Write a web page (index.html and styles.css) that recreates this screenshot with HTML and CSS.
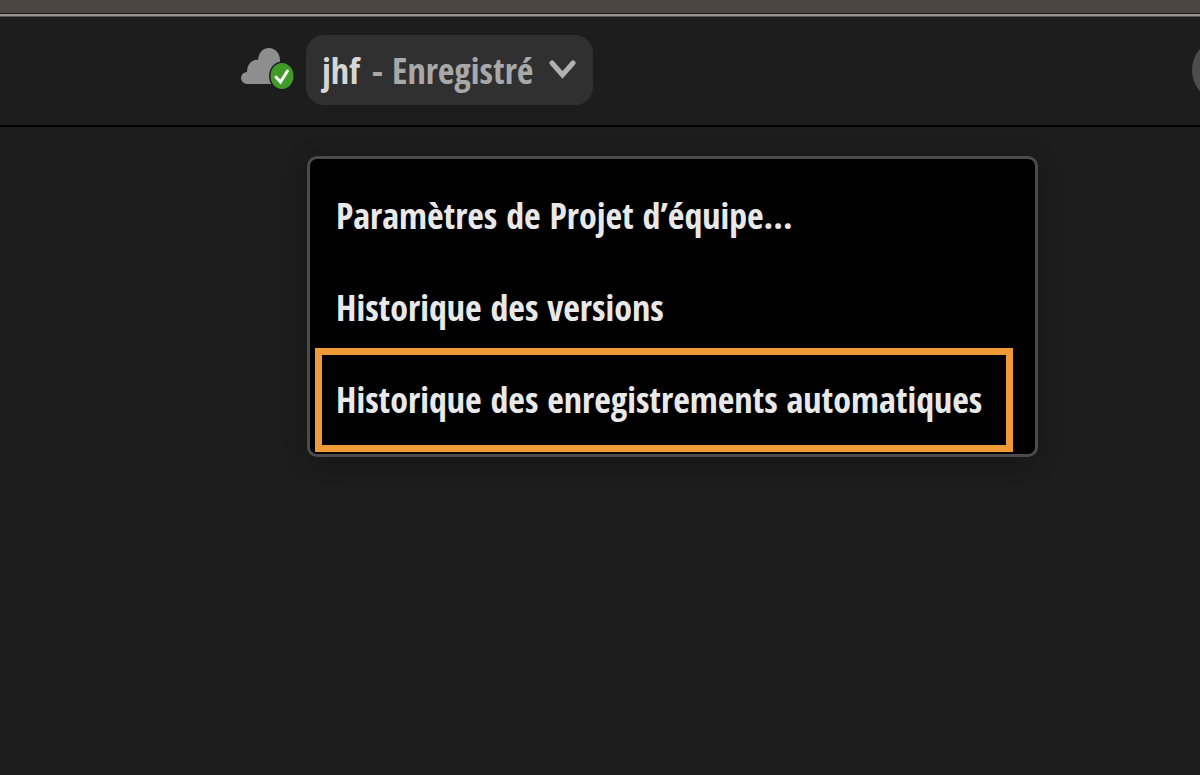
FILE: index.html
```html
<!DOCTYPE html>
<html lang="fr">
<head>
    <meta charset="UTF-8">
    <meta name="viewport" content="width=device-width, initial-scale=1.0">
    <title>Projet d’équipe</title>
    <link rel="stylesheet" href="styles.css">
</head>
<body>
    <div class="window-edge"></div>
    <header class="header">
        <svg class="cloud-icon" viewBox="0 0 54 44" aria-hidden="true">
            <path fill="#8e8e8e" d="M7 36a6 6 0 0 1 0-12C7 16 12 11 18 12 19 4 23 0 29 0s11 5 11 12v24z"/>
            <ellipse cx="42" cy="28" rx="13" ry="14.500" fill="#1d1d1d"/>
            <ellipse cx="42" cy="28" rx="11.500" ry="13" fill="#3f9a27"/>
            <path d="M36 29l4.500 5 7-11" fill="none" stroke="#fff" stroke-width="3" stroke-linecap="round"/>
        </svg>
        <button class="project-btn" id="projectBtn" aria-haspopup="true" aria-controls="projectMenu">
            <span class="project-name">jhf</span>
            <span class="project-status">- Enregistré</span>
            <svg class="chevron" viewBox="0 0 28 22" aria-hidden="true">
                <path d="M3 4l10.500 12L24 4" fill="none" stroke="#b0b0b0" stroke-width="5" stroke-linecap="round"/>
            </svg>
        </button>
        <button class="account-btn" aria-label="Compte"></button>
    </header>
    <main class="content">
        <div class="menu" id="projectMenu" role="menu" aria-labelledby="projectBtn">
            <button class="menu-item" role="menuitem">Paramètres de Projet d’équipe…</button>
            <button class="menu-item" role="menuitem">Historique des versions</button>
            <button class="menu-item selected" role="menuitem">Historique des enregistrements automatiques</button>
        </div>
    </main>
</body>
</html>
```
FILE: styles.css
```css
* {
    box-sizing: border-box;
}
body {
    min-height: 100vh;
    margin: 0;
    font-family: "Open Sans Condensed", "Roboto Condensed", "Open Sans", sans-serif;
    font-size: 36px;
    background: #1d1d1d;
    color: #e8e8e8;
    display: flex;
    flex-direction: column;
    overflow-x: hidden;
}
button {
    font: inherit;
    color: inherit;
    border: none;
    cursor: pointer;
}
.window-edge {
    height: 17px;
    background: linear-gradient(#4c4541 13px, #1a1918 13px, #1a1918 14px, #98928f 14px, #98928f 16px, #5a5858 16px);
}
.header {
    display: flex;
    align-items: center;
    height: 110px;
    padding: 0 0 2px 240px;
    border-bottom: 2px solid #000;
}
.cloud-icon {
    width: 54px;
    height: 44px;
    margin-right: 12px;
    flex-shrink: 0;
}
.project-btn {
    display: flex;
    align-items: center;
    gap: 12px;
    height: 70px;
    padding: 0 16px;
    border-radius: 18px;
    background: #303030;
    white-space: nowrap;
}
.project-name {
    color: #d6d6d6;
}
.project-status {
    color: #a8a8a8;
}
.chevron {
    width: 28px;
    height: 22px;
    margin-left: 4px;
}
.account-btn {
    width: 50px;
    height: 58px;
    margin-left: auto;
    margin-right: -42px;
    border-radius: 50%;
    background: #4d4d4d;
    flex-shrink: 0;
}
.content {
    padding: 29px 24px 24px 307px;
}
.menu {
    display: flex;
    flex-direction: column;
    width: max-content;
    padding: 11px 28px 8px 11px;
    border: 3px solid #4b4b4b;
    border-radius: 10px;
    background: #000;
    box-shadow: 0 4px 24px rgba(0, 0, 0, 0.25);
}
.menu-item {
    height: 92px;
    padding: 0 25px 2px 15px;
    background: none;
    text-align: left;
    white-space: nowrap;
}
.menu-item.selected {
    outline: 7px solid #f09a37;
    outline-offset: -1px;
}
```
